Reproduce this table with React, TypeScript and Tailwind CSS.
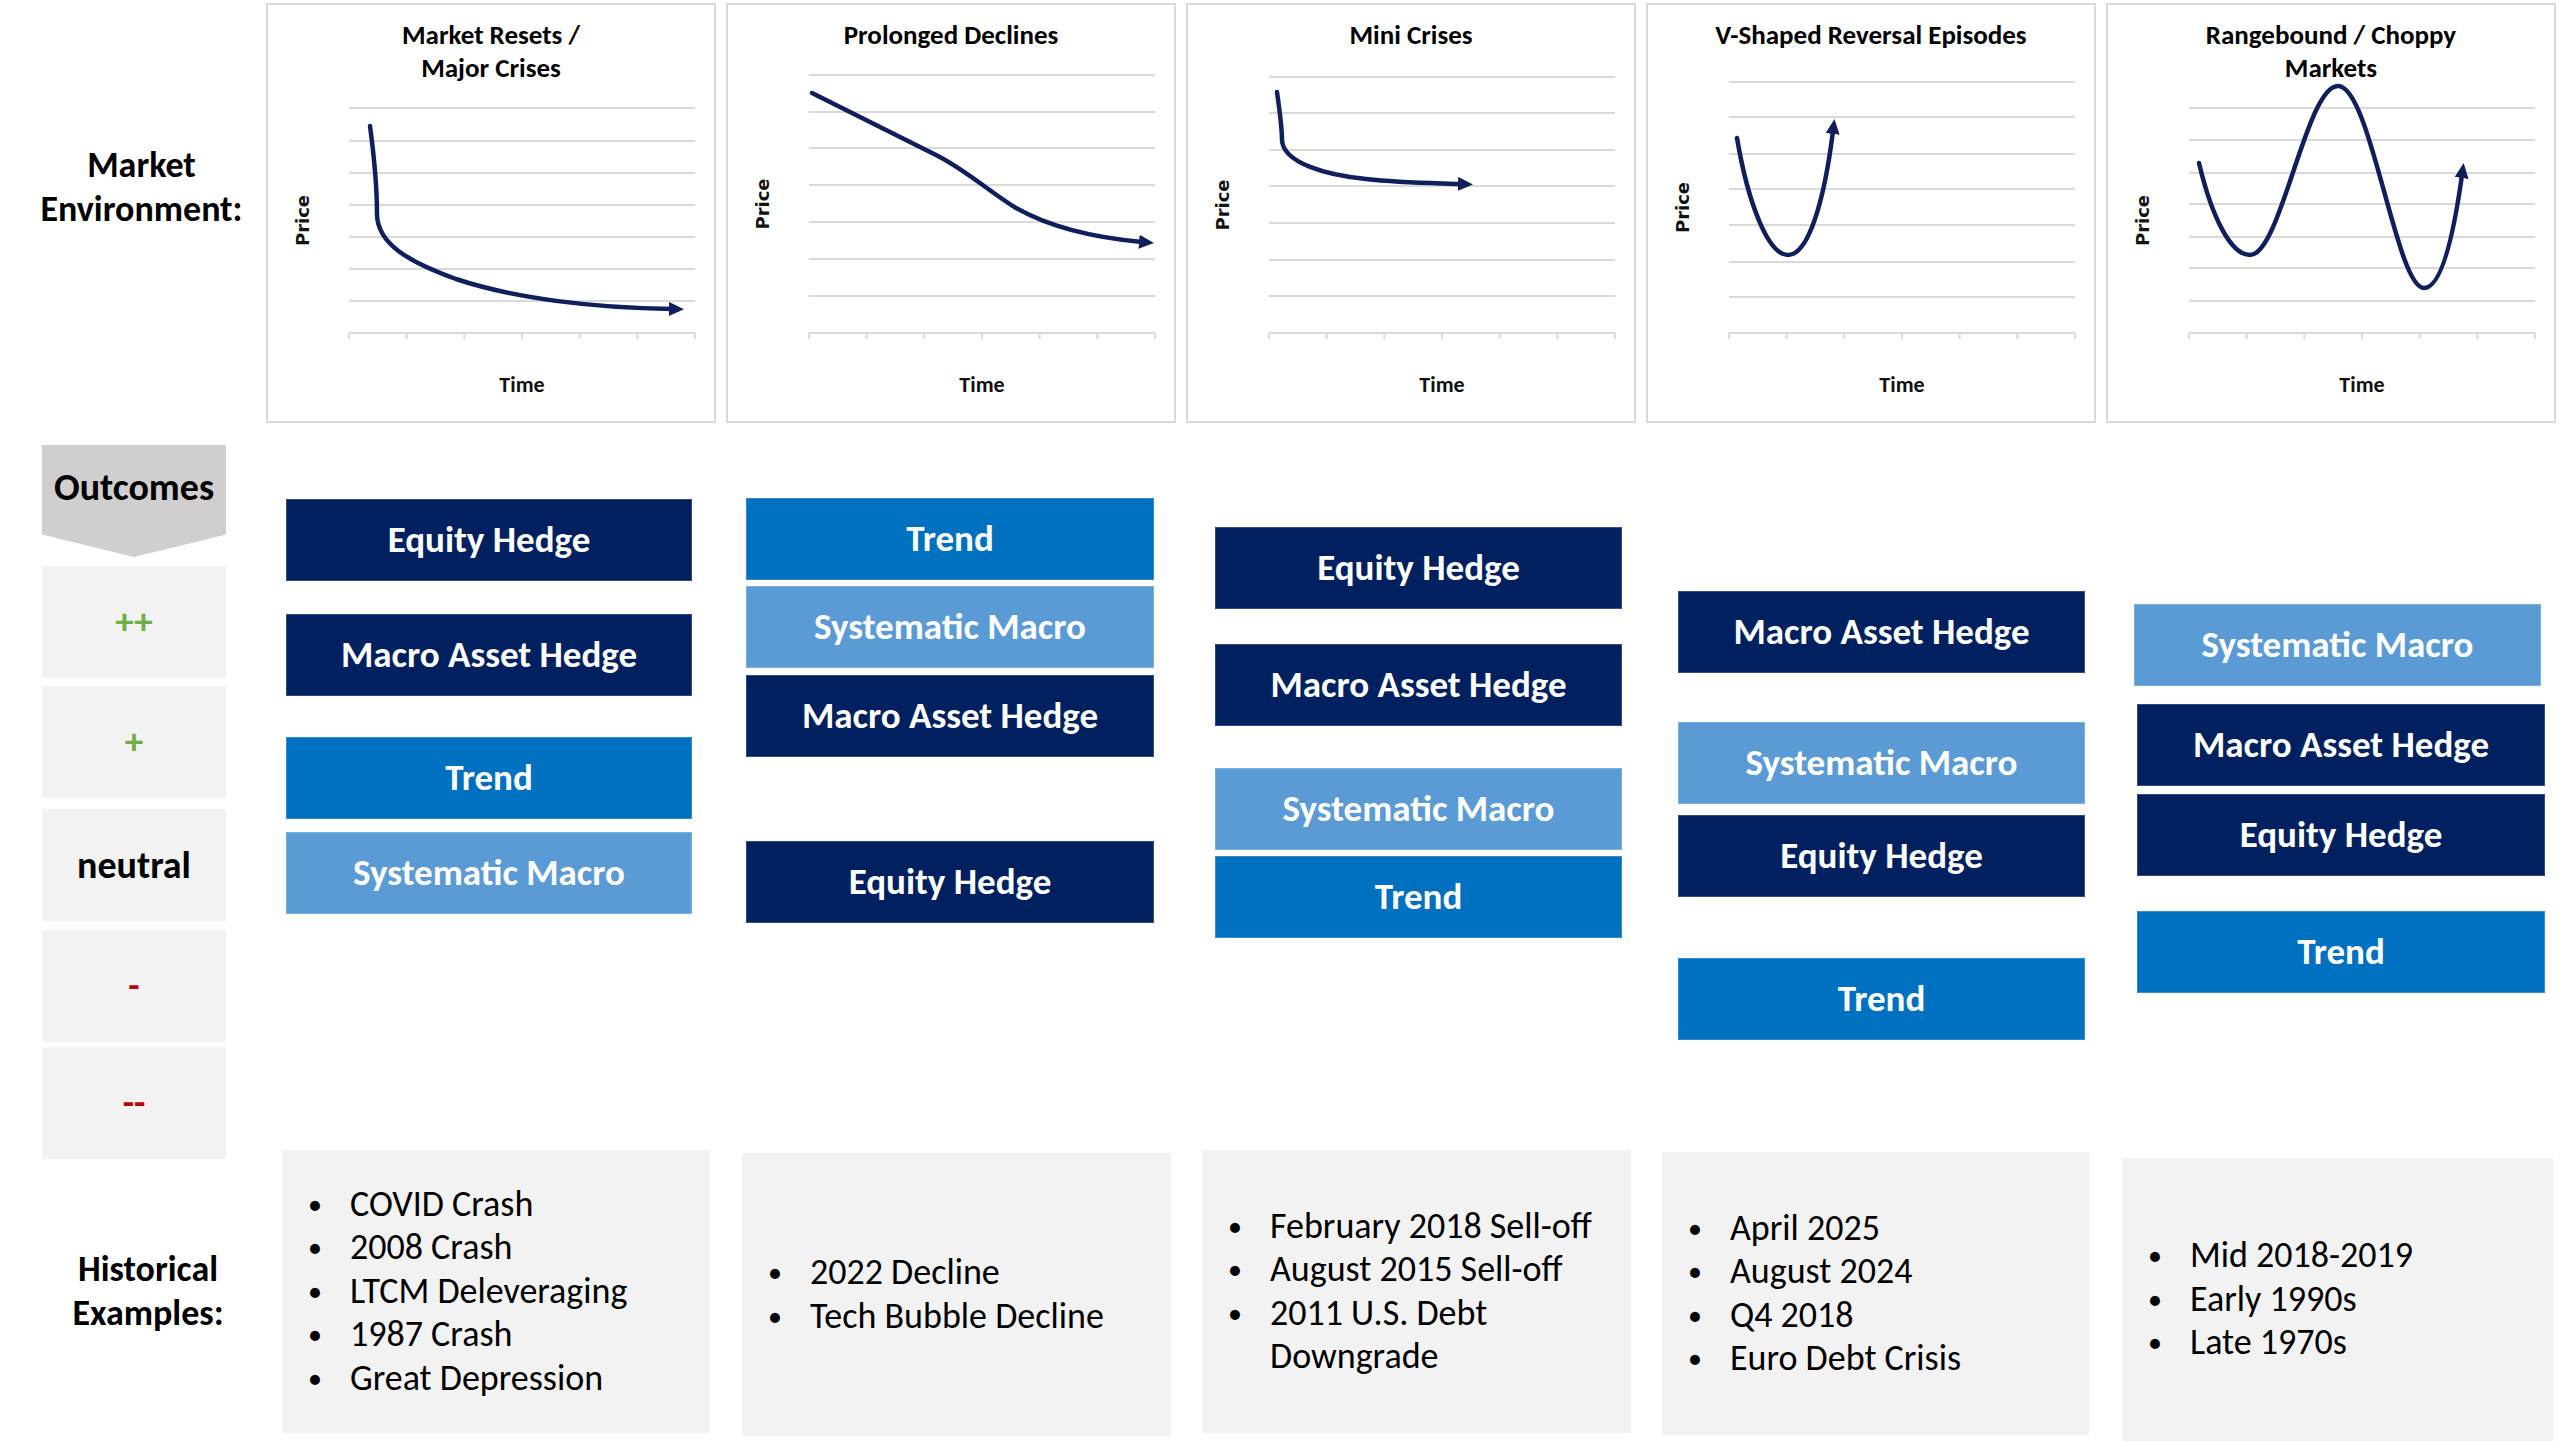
import React from "react";

type Kind = "navy" | "blue" | "light";

type Box = { label: string; kind: Kind; mt: number; ml: number; w: number };

type Col = {
  title: React.ReactNode;
  grid: number[];
  path: string;
  boxes: Box[];
  histMt: number;
  histW: number;
  items: React.ReactNode[];
};

const kindClass: Record<Kind, string> = {
  navy: "bg-[#002060]",
  blue: "bg-[#0070c0]",
  light: "bg-[#5b9bd5]",
};

const cols: Col[] = [
  {
    title: (
      <>
        Market Resets /<br />
        Major Crises
      </>
    ),
    grid: [105, 138, 170, 202, 234, 266, 298, 330],
    path: "M104,123 C109,160 111,195 111,212 C112,240 140,258 190,276 C250,296 330,305 406,306",
    boxes: [
      { label: "Equity Hedge", kind: "navy", mt: 76, ml: 20, w: 406 },
      { label: "Macro Asset Hedge", kind: "navy", mt: 33, ml: 20, w: 406 },
      { label: "Trend", kind: "blue", mt: 41, ml: 20, w: 406 },
      { label: "Systematic Macro", kind: "light", mt: 13, ml: 20, w: 406 },
    ],
    histMt: 236,
    histW: 428,
    items: ["COVID Crash", "2008 Crash", "LTCM Deleveraging", "1987 Crash", "Great Depression"],
  },
  {
    title: <>Prolonged Declines</>,
    grid: [72, 109, 145, 182, 219, 256, 293, 330],
    path: "M86,90 L210,152 C240,167 265,190 290,205 C320,222 360,234 416,239",
    boxes: [
      { label: "Trend", kind: "blue", mt: 75, ml: 20, w: 408 },
      { label: "Systematic Macro", kind: "light", mt: 6, ml: 20, w: 408 },
      { label: "Macro Asset Hedge", kind: "navy", mt: 7, ml: 20, w: 408 },
      { label: "Equity Hedge", kind: "navy", mt: 84, ml: 20, w: 408 },
    ],
    histMt: 230,
    histW: 429,
    items: ["2022 Decline", "Tech Bubble Decline"],
  },
  {
    title: <>Mini Crises</>,
    grid: [74, 110, 147, 183, 220, 257, 293, 330],
    path: "M91,89 C94,110 96,125 96,137 C97,160 140,172 180,176 C215,180 245,180 275,181",
    boxes: [
      { label: "Equity Hedge", kind: "navy", mt: 104, ml: 29, w: 407 },
      { label: "Macro Asset Hedge", kind: "navy", mt: 35, ml: 29, w: 407 },
      { label: "Systematic Macro", kind: "light", mt: 42, ml: 29, w: 407 },
      { label: "Trend", kind: "blue", mt: 6, ml: 29, w: 407 },
    ],
    histMt: 212,
    histW: 429,
    items: [
      "February 2018 Sell-off",
      "August 2015 Sell-off",
      <>
        2011 U.S. Debt
        <br />
        Downgrade
      </>,
    ],
  },
  {
    title: <>V-Shaped Reversal Episodes</>,
    grid: [79, 114, 151, 186, 222, 259, 294, 330],
    path: "M91,135 C102,200 122,252 142,252 C162,252 178,200 187,128",
    boxes: [
      { label: "Macro Asset Hedge", kind: "navy", mt: 168, ml: 32, w: 407 },
      { label: "Systematic Macro", kind: "light", mt: 49, ml: 32, w: 407 },
      { label: "Equity Hedge", kind: "navy", mt: 11, ml: 32, w: 407 },
      { label: "Trend", kind: "blue", mt: 61, ml: 32, w: 407 },
    ],
    histMt: 112,
    histW: 427,
    items: ["April 2025", "August 2024", "Q4 2018", "Euro Debt Crisis"],
  },
  {
    title: (
      <>
        Rangebound / Choppy
        <br />
        Markets
      </>
    ),
    grid: [105, 137, 170, 201, 234, 265, 298, 330],
    path: "M93,160 C106,215 125,252 144,252 C175,252 200,83 232,83 C265,83 290,285 318,285 C338,285 350,215 356,172",
    boxes: [
      { label: "Systematic Macro", kind: "light", mt: 181, ml: 28, w: 407 },
      { label: "Macro Asset Hedge", kind: "navy", mt: 18, ml: 31, w: 408 },
      { label: "Equity Hedge", kind: "navy", mt: 8, ml: 31, w: 408 },
      { label: "Trend", kind: "blue", mt: 35, ml: 31, w: 408 },
    ],
    histMt: 165,
    histW: 431,
    items: ["Mid 2018-2019", "Early 1990s", "Late 1970s"],
  },
];

function ChartSvg({ grid, path, id }: { grid: number[]; path: string; id: string }) {
  const ticks = [0, 1, 2, 3, 4, 5, 6].map((i) => 83 + (i * 346) / 6);
  const mid = (grid[0] + 330) / 2;
  return (
    <svg
      width={446}
      height={340}
      viewBox="2 78 446 340"
      overflow="visible"
      className="block"
    >
      <defs>
        <marker
          id={id}
          markerUnits="userSpaceOnUse"
          markerWidth={16}
          markerHeight={16}
          refX={3}
          refY={7}
          orient="auto"
        >
          <path d="M0,0 L15,7 L0,14 Z" fill="#0e1f5b" />
        </marker>
      </defs>
      {grid.map((y) => (
        <line key={y} x1={83} x2={429} y1={y} y2={y} stroke="#d9d9d9" strokeWidth={2} />
      ))}
      {ticks.map((x) => (
        <line key={x} x1={x} x2={x} y1={330} y2={336} stroke="#d9d9d9" strokeWidth={2} />
      ))}
      <path
        d={path}
        fill="none"
        stroke="#0e1f5b"
        strokeWidth={4.5}
        strokeLinecap="round"
        markerEnd={`url(#${id})`}
      />
      <text
        x={38}
        y={mid}
        transform={`rotate(-90 38 ${mid})`}
        textAnchor="middle"
        dominantBaseline="middle"
        fontFamily="'DejaVu Sans', Verdana, sans-serif"
        fontWeight={700}
        fontSize={18}
        fill="#111"
      >
        Price
      </text>
      <text
        x={256}
        y={384}
        textAnchor="middle"
        dominantBaseline="middle"
        fontFamily="Carlito, Lato, sans-serif"
        fontWeight={700}
        fontSize={22}
        fill="#111"
      >
        Time
      </text>
    </svg>
  );
}

function Outcome({ children, mt, cls }: { children: React.ReactNode; mt: string; cls: string }) {
  return (
    <div className={`${mt} h-[112px] bg-[#f2f2f2] flex items-center justify-center ${cls}`}>
      {children}
    </div>
  );
}

export default function App() {
  return (
    <div className="w-[2560px] h-[1444px] bg-white text-black font-[Carlito,Lato,sans-serif] flex pt-[3px] overflow-hidden">
      {/* left labels */}
      <div className="w-[266px] shrink-0 flex flex-col">
        <div className="h-[420px] pt-[140px] pl-[17px] text-center text-[36px] font-bold leading-[44px]">
          Market
          <br />
          Environment:
        </div>
        <div className="ml-[42px] mt-[22px] w-[184px] flex flex-col">
          <div className="h-[112px] bg-[#d0cece] [clip-path:polygon(0_0,100%_0,100%_80%,50%_100%,0_80%)] flex justify-center pt-[19px]">
            <span className="text-[38px] font-bold leading-[46px]">Outcomes</span>
          </div>
          <Outcome mt="mt-[9px]" cls="text-[#70ad47] text-[37px] font-semibold">
            ++
          </Outcome>
          <Outcome mt="mt-[8px]" cls="text-[#70ad47] text-[37px] font-semibold">
            +
          </Outcome>
          <Outcome mt="mt-[11px]" cls="text-black text-[38px] font-bold">
            neutral
          </Outcome>
          <Outcome mt="mt-[9px]" cls="text-[#c00000] text-[37px] font-bold">
            -
          </Outcome>
          <Outcome mt="mt-[5px]" cls="text-[#c00000] text-[37px] font-bold">
            --
          </Outcome>
        </div>
        <div className="mt-[88px] pl-[30px] text-center text-[36px] font-bold leading-[44px]">
          Historical
          <br />
          Examples:
        </div>
      </div>

      {/* columns */}
      <div className="flex gap-[10px]">
        {cols.map((c, ci) => (
          <div key={ci} className="w-[450px] shrink-0 flex flex-col">
            <div className="h-[420px] border-2 border-[#d9d9d9] bg-white flex flex-col">
              <div className="h-[76px] pt-[13px] text-center text-[27px] font-bold leading-[33px]">
                {c.title}
              </div>
              <ChartSvg grid={c.grid} path={c.path} id={`arrow${ci}`} />
            </div>
            {c.boxes.map((b, bi) => (
              <div
                key={bi}
                style={{ marginTop: b.mt, marginLeft: b.ml, width: b.w }}
                className={`h-[82px] ${kindClass[b.kind]} border border-white/20 flex items-center justify-center text-white text-[37px] font-bold`}
              >
                {b.label}
              </div>
            ))}
            <div
              style={{ marginTop: c.histMt, width: c.histW }}
              className="ml-[16px] h-[283px] bg-[#f2f2f2] flex flex-col justify-center pl-[26px] text-[36px] leading-[43.5px]"
            >
              {c.items.map((it, ii) => (
                <div key={ii} className="flex whitespace-nowrap">
                  <span className="w-[42px] shrink-0 text-[28px]">•</span>
                  <span>{it}</span>
                </div>
              ))}
            </div>
          </div>
        ))}
      </div>
    </div>
  );
}
